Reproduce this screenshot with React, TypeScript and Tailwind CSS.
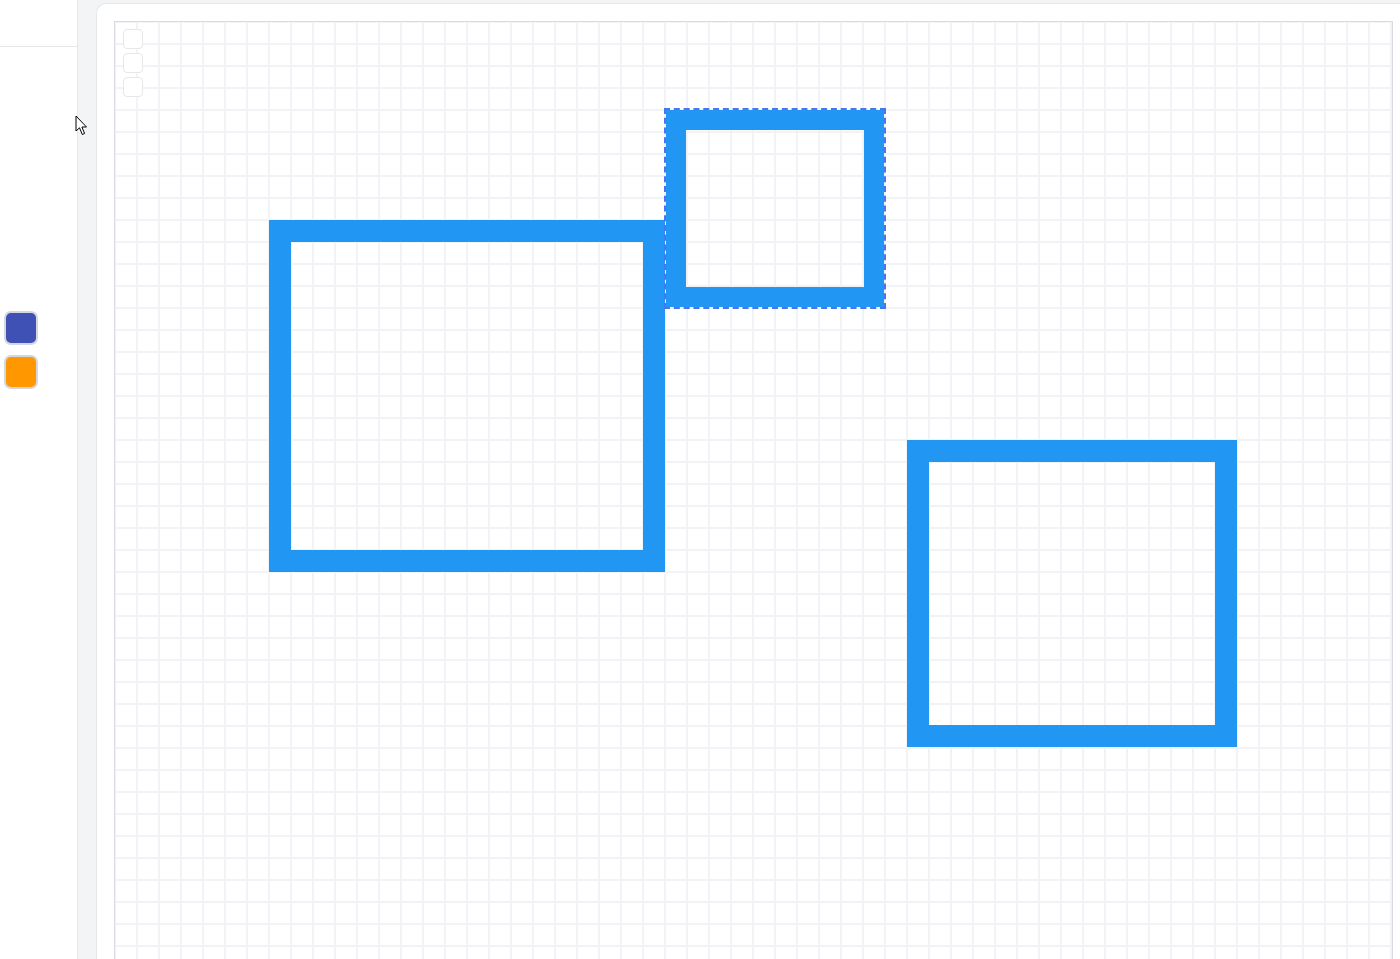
export default function App() {
  return (
    <div className="flex h-[959px] w-[1400px] overflow-hidden bg-[#f3f4f6] font-['Inter',sans-serif]">
      <aside className="relative flex w-[78px] shrink-0 flex-col border-r border-[#e5e7eb] bg-white">
        <div className="h-[47px] border-b border-[#e5e7eb]" />
        <div className="mt-[264px] flex flex-col gap-[10px] pl-[4px]">
          <button className="h-[34px] w-[34px] rounded-[7px] border-2 border-[#d4d7de] bg-[#3f51b5]" />
          <button className="h-[34px] w-[34px] rounded-[7px] border-2 border-[#d4d7de] bg-[#ff9800]" />
        </div>
        <svg
          className="absolute left-[75px] top-[115px] z-10"
          width="14"
          height="22"
          viewBox="0 0 14 22"
        >
          <path
            d="M1 1 L1 16 L4.5 12.8 L7.3 19.5 L9.6 18.5 L6.9 12 L11.5 12 Z"
            fill="white"
            stroke="black"
            strokeWidth="1"
            strokeLinejoin="round"
          />
        </svg>
      </aside>
      <main className="flex-1 pl-[18px] pt-[3px]">
        <div className="h-[1000px] w-[1320px] rounded-tl-[10px] border-l border-t border-[#e5e7eb] bg-white pl-[17px] pt-[17px]">
          <div className="relative h-[980px] w-[1279px] border border-[#d8dbe1] bg-white bg-[linear-gradient(to_right,transparent_20px,#f2f3f6_20px),linear-gradient(to_bottom,transparent_20px,#f2f3f6_20px)] bg-[size:22px_22px] bg-[position:1px_1px]">
            <div className="absolute left-[8px] top-[7px] flex flex-col gap-[4px]">
              <button className="h-[20px] w-[20px] rounded-[4px] border border-[#e5e7eb] bg-white" />
              <button className="h-[20px] w-[20px] rounded-[4px] border border-[#e5e7eb] bg-white" />
              <button className="h-[20px] w-[20px] rounded-[4px] border border-[#e5e7eb] bg-white" />
            </div>

            <div className="absolute left-[154px] top-[198px] h-[352px] w-[396px] border-[22px] border-[#2196f3]" />

            <div className="absolute left-[549px] top-[86px] h-[201px] w-[222px] border-2 border-dashed border-[#4a74f0]">
              <div className="h-full w-full border-[20px] border-[#2196f3]" />
            </div>

            <div className="absolute left-[792px] top-[418px] h-[307px] w-[330px] border-[22px] border-[#2196f3]" />
          </div>
        </div>
      </main>
    </div>
  );
}
